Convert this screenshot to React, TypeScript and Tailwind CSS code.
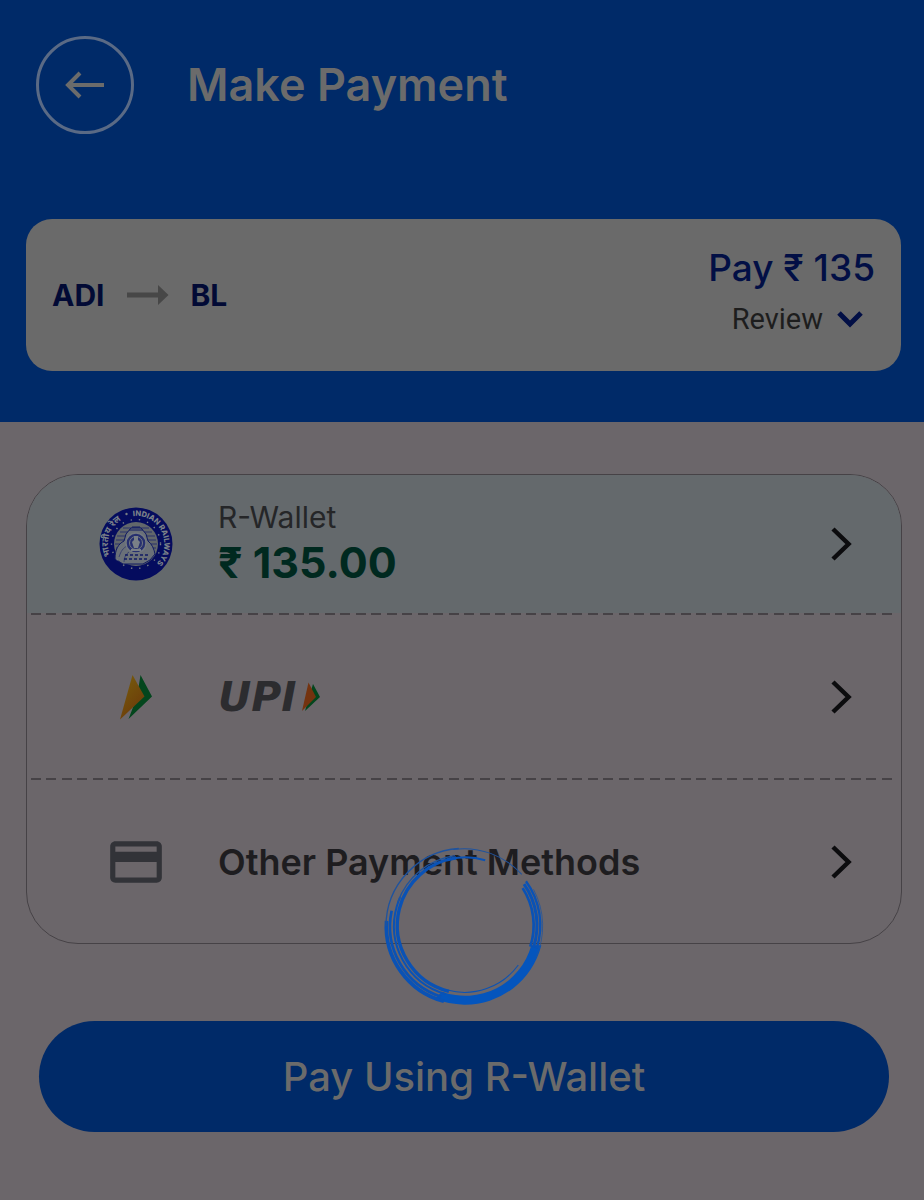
import React from 'react';
import { MdPayment } from 'react-icons/md';

type MethodRowProps = {
  icon: React.ReactNode;
  className: string;
  children: React.ReactNode;
};

type RingStroke = {
  cx: number;
  cy: number;
  r: number;
  width: number;
  from: number;
  to: number;
  soft?: boolean;
};

const DASHES = Array.from({ length: 56 }, (_, i) => i);

// angles in degrees, clockwise from three o'clock
const RING_STROKES: RingStroke[] = [
  { cx: 282, cy: 276, r: 233, width: 11, from: 105, to: 184 },
  { cx: 282, cy: 276, r: 234, width: 4, from: 180, to: 266, soft: true },
  { cx: 282, cy: 276, r: 233, width: 3, from: 262, to: 318, soft: true },
  { cx: 282, cy: 276, r: 222, width: 8, from: 108, to: 192 },
  { cx: 284, cy: 275, r: 212, width: 6, from: 106, to: 204 },
  { cx: 286, cy: 273, r: 204, width: 10, from: 104, to: 262 },
  { cx: 286, cy: 273, r: 204, width: 6, from: 258, to: 287 },
  { cx: 284, cy: 275, r: 213, width: 4, from: 200, to: 262, soft: true },
  { cx: 286, cy: 273, r: 205, width: 8, from: -33, to: 18 },
  { cx: 286, cy: 273, r: 215, width: 9, from: -35, to: 18 },
  { cx: 286, cy: 273, r: 225, width: 7, from: -36, to: 18 },
  { cx: 284, cy: 275, r: 234, width: 2, from: -28, to: 24, soft: true },
  { cx: 284, cy: 275, r: 199, width: 3, from: 36, to: 105 },
];

function DashedDivider() {
  return (
    <div className="ml-1 mr-[9px] flex h-0.5 justify-between">
      {DASHES.map((i) => (
        <span key={i} className="h-0.5 w-[10px] bg-[#464246]" />
      ))}
    </div>
  );
}

function BackArrow() {
  return (
    <svg width="40" height="28" viewBox="0 0 40 28" fill="none" stroke="#6b6b6b" strokeWidth="4">
      <path d="M39 14H3M15 2 3 14l12 12" />
    </svg>
  );
}

function RouteArrow() {
  return (
    <svg width="42" height="20" viewBox="0 0 42 20" fill="#474747">
      <path d="M0 7.500h31V0l10.500 10L31 20v-7.500H0z" />
    </svg>
  );
}

function ChevronRight() {
  return (
    <svg width="22" height="36" viewBox="0 0 22 36" fill="none" stroke="#0c0c0e" strokeWidth="4.500">
      <path d="M2 3l15.500 15L2 33" />
    </svg>
  );
}

function RailwayEmblem() {
  return (
    <svg width="74" height="74" viewBox="0 0 74 74" role="img" aria-label="Indian Railways">
      <defs>
        <path id="emblem-top" d="M34 9.200A28 28 0 1 1 37 65" />
        <path id="emblem-left" d="M11.600 48.800A28 28 0 0 1 37 9" />
      </defs>
      <circle cx="37" cy="37" r="36.500" fill="#050c5e" />
      <circle cx="37" cy="37" r="22" fill="#62676b" />
      <g stroke="#2a326c" strokeWidth="1">
        <path d="M24 21h26M21 25h32M18 29h38M17 33h40M16 37h42M17 41h40M18 45h38" />
      </g>
      {/* locomotive */}
      <path
        d="M16 52c0-9 3-15 9-18l2-7 5-6h10l5 6 2 7c4 3 6 8 7 13l-5 6-7 4H24z"
        fill="#6a7078"
        stroke="#101a63"
        strokeWidth="1"
      />
      <path d="M20 50c2-6 4-9 8-11M25 55c0-5 2-8 5-10" fill="none" stroke="#3a4270" />
      <circle cx="37" cy="36" r="10" fill="#27306f" stroke="#737981" strokeWidth="1.400" />
      <circle cx="37" cy="36" r="6.500" fill="none" stroke="#737981" strokeWidth="1" />
      <path d="M35 29h4v4l2 2-2 6h-4l-2-6 2-2zM32 42h10v2H32z" fill="#7a8087" />
      <path d="M26 48h25M25 52h25" stroke="#101a63" strokeWidth="1.400" strokeDasharray="3 2" />
      <path d="M30 23h14M33 20h8" stroke="#101a63" strokeWidth="1.200" />
      <circle
        cx="37"
        cy="37"
        r="24.500"
        fill="none"
        stroke="#777d84"
        strokeWidth="1.400"
        strokeDasharray="1.400 7"
      />
      <circle cx="27.500" cy="7" r="1.200" fill="#777d84" />
      <text
        fill="#7c8289"
        fontSize="7.500"
        className="font-['Inter','Liberation_Sans',sans-serif] font-extrabold"
      >
        <textPath href="#emblem-top">INDIAN RAILWAYS</textPath>
      </text>
      <text fill="#7c8289" fontSize="9" className="font-['Noto_Sans',sans-serif] font-bold">
        <textPath href="#emblem-left">भारतीय रेल</textPath>
      </text>
    </svg>
  );
}

function UpiMark() {
  return (
    <svg width="34" height="46" viewBox="0 0 34 46">
      <defs>
        <linearGradient id="upi-amber" x1="0" y1="0" x2="0.600" y2="1">
          <stop offset="0" stopColor="#775f0c" />
          <stop offset="1" stopColor="#6c3a0a" />
        </linearGradient>
      </defs>
      <path d="M21.500 1 33 22.500 9.500 45 18 23z" fill="#03461d" />
      <path d="M13.500 1 25.500 22.500 1 45.500z" fill="url(#upi-amber)" />
    </svg>
  );
}

function UpiLogo() {
  return (
    <svg width="106" height="50" viewBox="0 0 106 50" role="img" aria-label="UPI">
      <text
        x="0"
        y="39"
        fill="#2c2c2f"
        fontSize="41"
        className="font-['DejaVu_Sans',sans-serif] font-bold italic"
      >
        UPI
      </text>
      <path d="M95 12 102 25 87 39z" fill="#03461d" />
      <path d="M90.500 10.500 98 25 84 39z" fill="#74330f" />
    </svg>
  );
}

// Brush-stroke ring, heaviest at the bottom right
function Spinner() {
  return (
    <svg width="160" height="160" viewBox="36 38 480 480" fill="none" className="overflow-visible">
      <path
        d="M514 333A236 236 0 0 1 282 511Q235 509 195 495L215 472A206 206 0 0 0 484 333z"
        fill="#0455bd"
      />
      {RING_STROKES.map((s, i) => (
        <circle
          key={i}
          cx={s.cx}
          cy={s.cy}
          r={s.r}
          stroke={s.soft ? '#1f539e' : '#0a52b5'}
          strokeWidth={s.width}
          pathLength={360}
          strokeDasharray={`${s.to - s.from} 360`}
          transform={`rotate(${s.from} ${s.cx} ${s.cy})`}
        />
      ))}
    </svg>
  );
}

function MethodRow({ icon, className, children }: MethodRowProps) {
  return (
    <button className={`flex w-full items-center pr-12 text-left ${className}`}>
      <span className="ml-[47px] mr-5 flex w-[124px] justify-center">{icon}</span>
      <span className="flex-1">{children}</span>
      <ChevronRight />
    </button>
  );
}

export default function App() {
  return (
    <main className="relative min-h-screen bg-[#6b666a] font-['Inter','Liberation_Sans',sans-serif]">
      <header className="bg-[#002a68] pb-[51px] pt-9">
        <div className="flex items-center gap-[53px] px-9">
          <button
            aria-label="Back"
            className="flex size-[98px] items-center justify-center rounded-full border-[3px] border-[#5a6a85]"
          >
            <BackArrow />
          </button>
          <h1 className="text-[45px] font-semibold leading-[52px] text-[#6b6b6b]">Make Payment</h1>
        </div>

        {/* Fare summary */}
        <section className="ml-[26px] mr-[23px] mt-[85px] flex h-[152px] justify-between rounded-[26px] bg-[#6a6a6a] px-[26px]">
          <div className="flex items-center gap-[22px] text-[30px] font-bold leading-9 text-[#020a35]">
            <span>ADI</span>
            <RouteArrow />
            <span>BL</span>
          </div>
          <div className="flex flex-col items-end gap-[10px] pt-[26px]">
            <p className="text-[37px] font-medium leading-[46px] text-[#020f45]">Pay ₹ 135</p>
            <button className="flex items-center gap-[14px] pr-3 font-['Roboto',sans-serif] text-[29px] leading-9 text-[#1d1d1d]">
              Review
              <svg width="26" height="18" viewBox="0 0 26 18" fill="none" stroke="#020f45" strokeWidth="5">
                <path d="M2 3l11 11L24 3" />
              </svg>
            </button>
          </div>
        </section>
      </header>

      {/* Payment methods */}
      <section className="ml-[26px] mr-[22px] mt-[52px] overflow-hidden rounded-[52px] border border-[#464246]">
        <MethodRow className="h-[138px] bg-[#64696c]" icon={<RailwayEmblem />}>
          <span className="block text-[30px] leading-9 text-[#252628]">R-Wallet</span>
          <span className="block text-[43px] font-bold leading-[54px] text-[#00291f]">₹ 135.00</span>
        </MethodRow>
        <DashedDivider />
        <MethodRow className="h-[163px]" icon={<UpiMark />}>
          <UpiLogo />
        </MethodRow>
        <DashedDivider />
        <MethodRow className="h-[163px]" icon={<MdPayment size={62} color="#323338" />}>
          <span className="text-[36px] font-semibold leading-[44px] text-[#1e1d20]">
            Other Payment Methods
          </span>
        </MethodRow>
      </section>

      <div className="ml-[39px] mr-[35px] pb-16 pt-[77px]">
        <button className="h-[111px] w-full rounded-full bg-[#002a68] text-[40px] font-medium leading-[48px] text-[#6b6b6b]">
          Pay Using R-Wallet
        </button>
      </div>

      <div
        role="status"
        aria-label="Loading"
        className="absolute left-1/2 top-[847px] -translate-x-1/2"
      >
        <Spinner />
      </div>
    </main>
  );
}
